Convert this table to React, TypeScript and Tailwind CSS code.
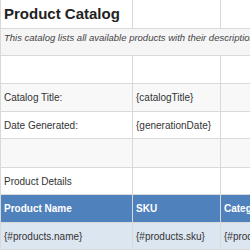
export default function App() {
  const cell = "border-r border-b border-[#d9d9d9] px-[3px] flex items-center overflow-hidden whitespace-nowrap";
  return (
    <div
      className="w-[250px] h-[250px] overflow-hidden bg-white text-[10px] text-[#333]"
      style={{ fontFamily: '"Liberation Sans", Arial, sans-serif' }}
    >
      <div className="grid grid-cols-[132px_88px_200px] grid-rows-[29px_27px_28px_28px_27px_29px_27px_28px_27px] border-l border-[#d9d9d9] w-max">
        <div className={`${cell} text-[15px] font-bold text-[#222]`}>Product Catalog</div>
        <div className={cell}></div>
        <div className={cell}></div>

        <div className={`${cell} col-span-3 items-start pt-[2px] italic text-[9.5px] bg-[#f5f5f5] text-[#444]`}>
          This catalog lists all available products with their descriptions, SKUs, categories and prices.
        </div>

        <div className={cell}></div>
        <div className={cell}></div>
        <div className={cell}></div>

        <div className={`${cell} bg-[#f8f8f8]`}>Catalog Title:</div>
        <div className={`${cell} bg-[#f8f8f8]`}>{"{catalogTitle}"}</div>
        <div className={`${cell} bg-[#f8f8f8]`}></div>

        <div className={cell}>Date Generated:</div>
        <div className={cell}>{"{generationDate}"}</div>
        <div className={cell}></div>

        <div className={`${cell} bg-[#f8f8f8]`}></div>
        <div className={`${cell} bg-[#f8f8f8]`}></div>
        <div className={`${cell} bg-[#f8f8f8]`}></div>

        <div className={cell}>Product Details</div>
        <div className={cell}></div>
        <div className={cell}></div>

        <div className={`${cell} bg-[#4f81bd] text-white font-bold`}>Product Name</div>
        <div className={`${cell} bg-[#4f81bd] text-white font-bold`}>SKU</div>
        <div className={`${cell} bg-[#4f81bd] text-white font-bold`}>Category</div>

        <div className={`${cell} bg-[#dce6f1]`}>{"{#products.name}"}</div>
        <div className={`${cell} bg-[#dce6f1]`}>{"{#products.sku}"}</div>
        <div className={`${cell} bg-[#dce6f1]`}>{"{#products.category}"}</div>
      </div>
    </div>
  );
}
